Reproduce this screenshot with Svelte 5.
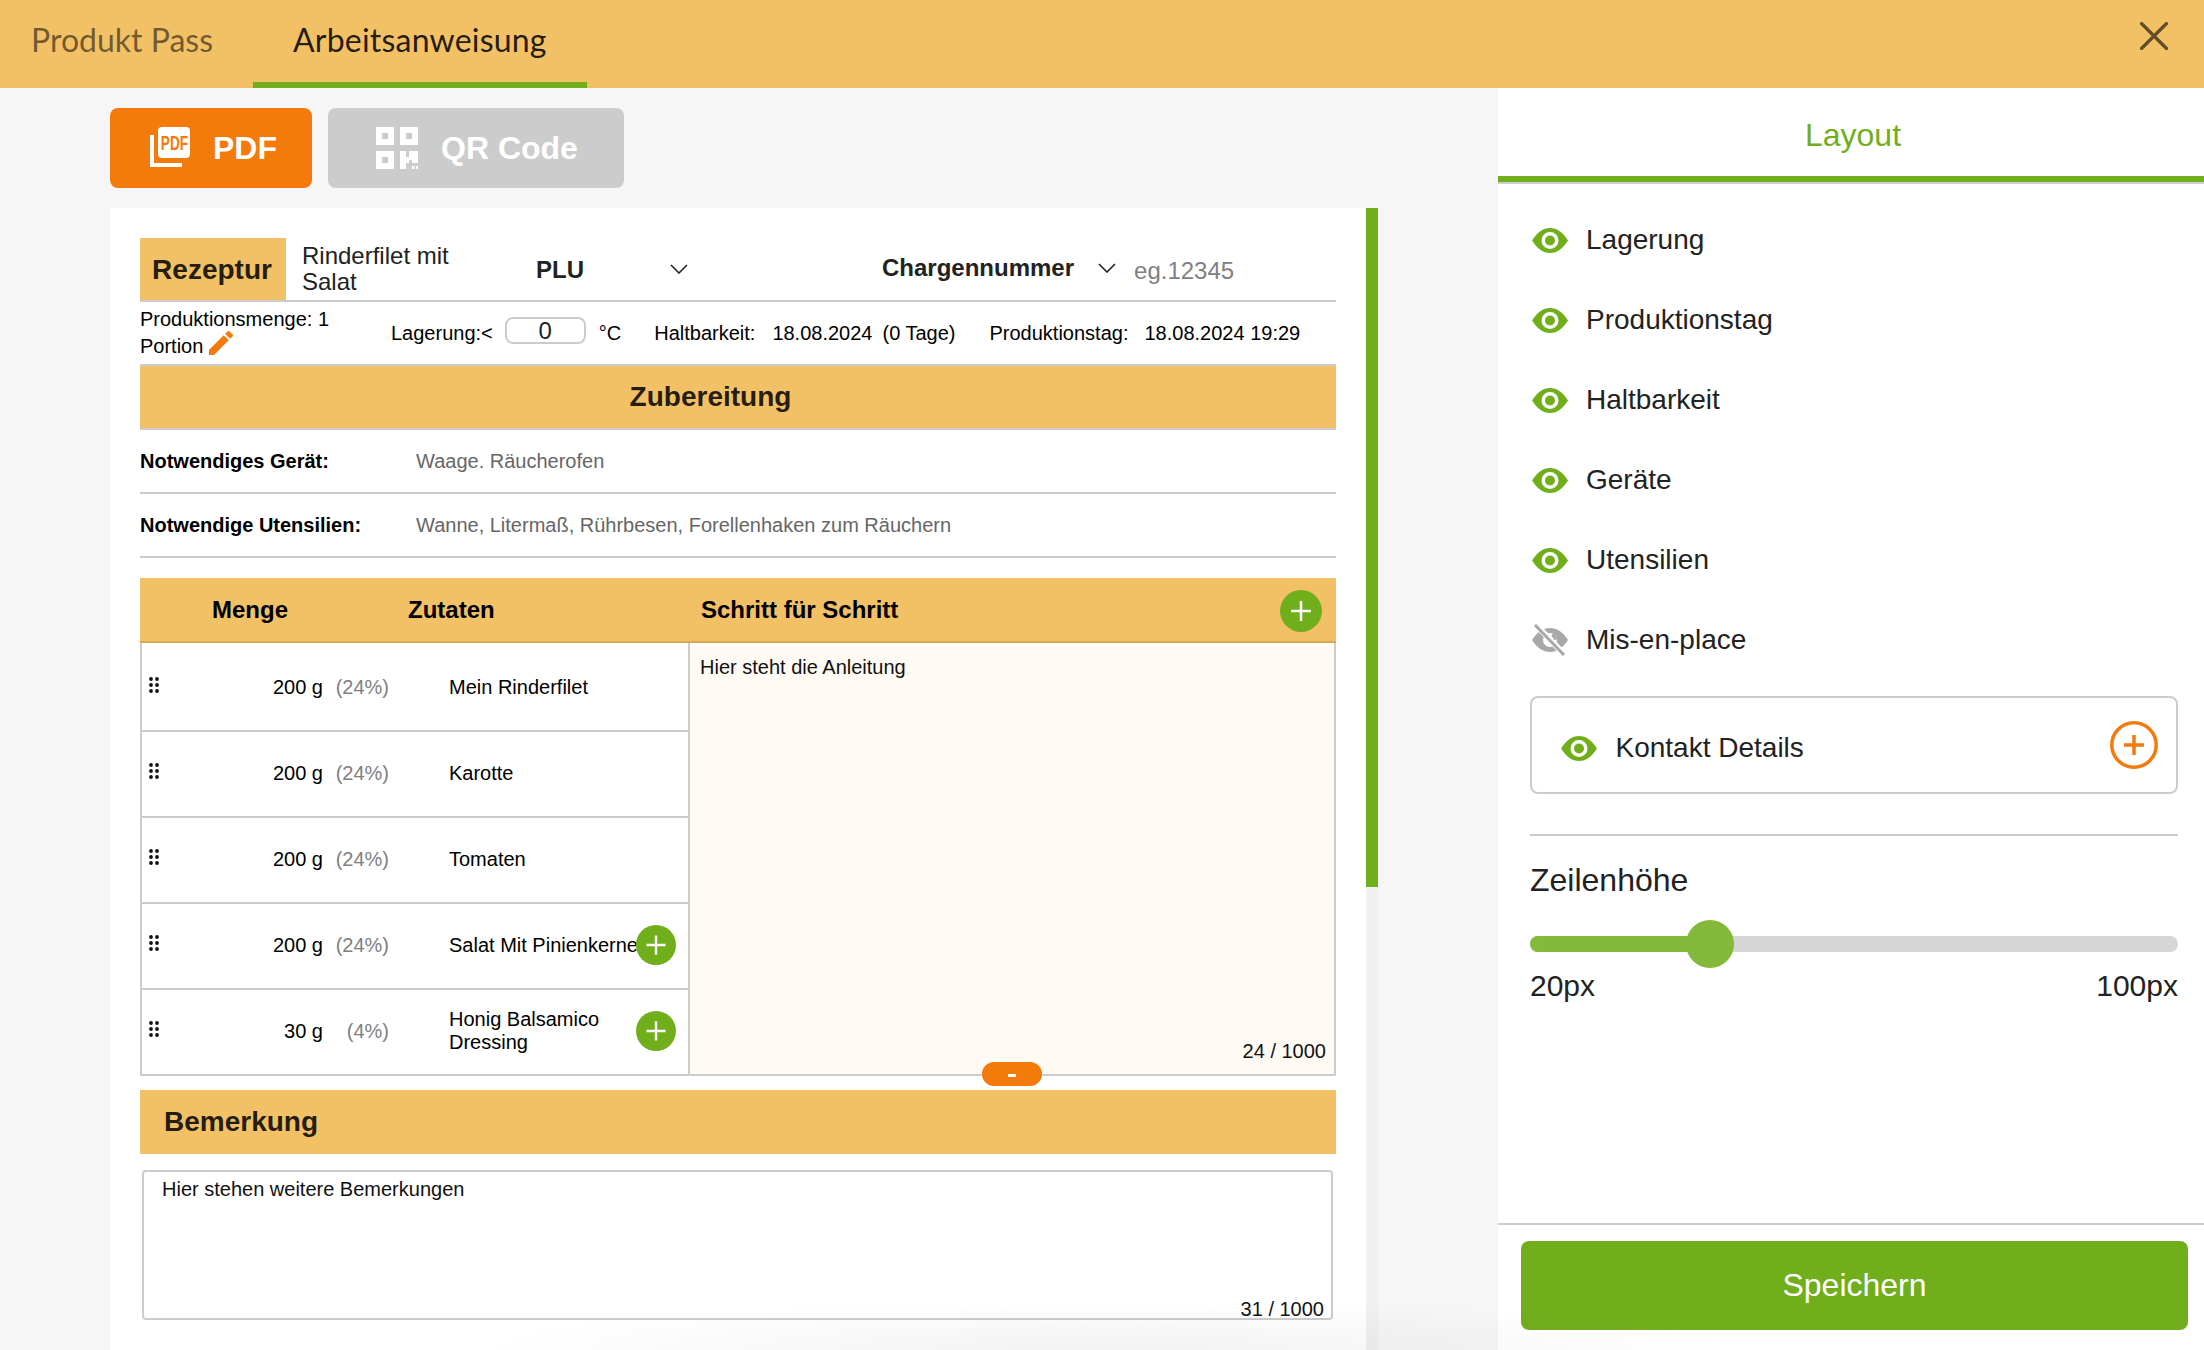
<script>
  const visibility = [
    { label: "Lagerung", on: true },
    { label: "Produktionstag", on: true },
    { label: "Haltbarkeit", on: true },
    { label: "Geräte", on: true },
    { label: "Utensilien", on: true },
    { label: "Mis-en-place", on: false }
  ];

  const ingredients = [
    { qty: "200 g", pct: "(24%)", name: "Mein Rinderfilet", add: false },
    { qty: "200 g", pct: "(24%)", name: "Karotte", add: false },
    { qty: "200 g", pct: "(24%)", name: "Tomaten", add: false },
    { qty: "200 g", pct: "(24%)", name: "Salat Mit Pinienkerne", add: true },
    { qty: "30 g", pct: "(4%)", name: "Honig Balsamico Dressing", add: true }
  ];

  const dots = [
    [2, 2], [8, 2],
    [2, 8], [8, 8],
    [2, 14], [8, 14]
  ];
</script>

{#snippet eye()}
  <svg class="eye" width="36" height="25" viewBox="0 0 36 25">
    <path fill="#71ae1c" fill-rule="evenodd" d="M0 12.5C5 4.5 11 0 18 0s13 4.500 18 12.500C31 20.500 25 25 18 25S5 20.500 0 12.500zM18 4a8.500 8.500 0 1 0 0 17 8.500 8.500 0 0 0 0-17z" />
    <circle cx="18" cy="12.500" r="5" fill="#71ae1c" />
  </svg>
{/snippet}

{#snippet eyeOff()}
  <svg class="eye" width="36" height="32" viewBox="0 0 36 32">
    <path fill="#a8a8a8" fill-rule="evenodd" d="M0 16C5 8 11 4 18 4s13 4 18 12c-5 8-11 12-18 12S5 24 0 16zM18 9a7 7 0 1 0 0 14 7 7 0 0 0 0-14z" />
    <path d="M20 11a5 5 0 0 1 3 5" fill="none" stroke="#a8a8a8" stroke-width="3" />
    <path d="M4 1l28 29" stroke="#fff" stroke-width="6" />
    <path d="M3 1l29 30" stroke="#a8a8a8" stroke-width="3" />
  </svg>
{/snippet}

{#snippet chevron()}
  <svg class="chevron" width="18" height="10" viewBox="0 0 18 10">
    <path d="M1 1l8 8 8-8" fill="none" stroke="#222" stroke-width="1.600" />
  </svg>
{/snippet}

{#snippet plus(size)}
  <svg width={size} height={size} viewBox="0 0 40 40" class="plus">
    <circle cx="20" cy="20" r="20" fill="#71ae1c" />
    <path d="M20 10.500v19M10.500 20h19" stroke="#fff" stroke-width="2.400" />
  </svg>
{/snippet}

<div class="page">
  <header class="topbar">
    <div class="tab first">Produkt Pass</div>
    <div class="tab active">Arbeitsanweisung</div>
    <svg class="close" width="28" height="28" viewBox="0 0 28 28">
      <path d="M1.500 1.500l25 25M26.500 1.500l-25 25" stroke="#000" stroke-opacity="0.6" stroke-width="3.200" stroke-linecap="round" />
    </svg>
  </header>

  <div class="body">
    <main class="left">
      <div class="actions">
        <button class="btn pdf">
          <svg width="40" height="40" viewBox="0 0 40 40">
            <path d="M2 8v30h30" fill="none" stroke="#fff" stroke-width="4" />
            <rect x="8" y="0" width="32" height="31" rx="4" fill="#fff" />
            <text transform="translate(24.500 23) scale(0.7 1)" text-anchor="middle" class="pdf-mark">PDF</text>
          </svg>
          <span>PDF</span>
        </button>
        <button class="btn qr">
          <svg width="42" height="42" viewBox="0 0 42 42" fill="#fff">
            <path fill-rule="evenodd" d="M0 0h18v18H0zM6 6v6h6V6z" />
            <path fill-rule="evenodd" d="M24 0h18v18H24zM30 6v6h6V6z" />
            <path fill-rule="evenodd" d="M0 24h18v18H0zM6 30v6h6v-6z" />
            <path d="M24 24h6v6h3v-6h9v12h-6v-3h-3v3h-3v6h-6z" />
            <path d="M36 39h2.500v3H36zM40 39h2v3h-2z" />
          </svg>
          <span>QR Code</span>
        </button>
      </div>

      <div class="sheet-wrap">
        <div class="sheet">
          <div class="title-row">
            <div class="title-box">Rezeptur</div>
            <div class="recipe-name">Rinderfilet mit Salat</div>
            <div class="plu"><b>PLU</b>{@render chevron()}</div>
            <div class="charge"><b>Chargennummer</b>{@render chevron()}<span class="charge-input">eg.12345</span></div>
          </div>

          <div class="info-row">
            <div class="portion">
              Produktionsmenge: 1 Portion
              <svg class="pencil" width="24" height="24" viewBox="3 3 18 18">
                <path fill="#f57a0c" d="M3 17.250V21h3.750L17.810 9.940l-3.750-3.750L3 17.250zM20.710 7.040c.39-.39.39-1.020 0-1.410l-2.340-2.340c-.39-.39-1.020-.39-1.410 0l-1.830 1.830 3.750 3.750 1.830-1.830z" />
              </svg>
            </div>
            <span>Lagerung:&lt;</span>
            <input class="temp" value="0" />
            <span class="unit">°C</span>
            <span class="hb">Haltbarkeit:</span>
            <span class="hb-date">18.08.2024</span>
            <span class="hb-days">(0 Tage)</span>
            <span class="pt">Produktionstag:</span>
            <span class="pt-date">18.08.2024 19:29</span>
          </div>

          <div class="section-bar">Zubereitung</div>

          <div class="note-row"><b>Notwendiges Gerät:</b><span>Waage. Räucherofen</span></div>
          <div class="note-row"><b>Notwendige Utensilien:</b><span>Wanne, Litermaß, Rührbesen, Forellenhaken zum Räuchern</span></div>

          <div class="table">
            <div class="table-head">
              <b class="h-menge">Menge</b>
              <b class="h-zutaten">Zutaten</b>
              <b class="h-schritt">Schritt für Schritt</b>
              {@render plus(42)}
            </div>
            <div class="table-body">
              <div class="rows">
                {#each ingredients as item}
                  <div class="row">
                    <svg class="handle" width="10" height="16" viewBox="0 0 10 16">
                      {#each dots as d}
                        <circle cx={d[0]} cy={d[1]} r="1.900" fill="#111" />
                      {/each}
                    </svg>
                    <span class="qty">{item.qty}</span>
                    <span class="pct">{item.pct}</span>
                    <span class="name">{item.name}</span>
                    {#if item.add}
                      {@render plus(40)}
                    {/if}
                  </div>
                {/each}
              </div>
              <div class="steps">
                <div>Hier steht die Anleitung</div>
                <div class="counter">24 / 1000</div>
                <div class="collapse"><span></span></div>
              </div>
            </div>
          </div>

          <div class="section-bar remark">Bemerkung</div>
          <div class="remark-box">
            <div>Hier stehen weitere Bemerkungen</div>
            <div class="counter">31 / 1000</div>
          </div>
        </div>
        <div class="scroll-track"><div class="scroll-thumb"></div></div>
      </div>
    </main>

    <aside class="right">
      <div class="panel-title">Layout</div>
      <div class="panel-body">
        {#each visibility as v}
          <div class="vis-row">
            {#if v.on}{@render eye()}{:else}{@render eyeOff()}{/if}
            <span>{v.label}</span>
          </div>
        {/each}

        <div class="contact">
          {@render eye()}
          <span>Kontakt Details</span>
          <svg class="contact-add" width="48" height="48" viewBox="0 0 48 48">
            <circle cx="24" cy="24" r="22.200" fill="none" stroke="#f57a0c" stroke-width="3.500" />
            <path d="M24 14v20M14 24h20" stroke="#f57a0c" stroke-width="3.500" />
          </svg>
        </div>

        <div class="line-height">
          <div class="lh-title">Zeilenhöhe</div>
          <div class="slider">
            <div class="slider-fill"></div>
            <div class="slider-thumb"></div>
          </div>
          <div class="lh-range"><span>20px</span><span>100px</span></div>
        </div>
      </div>
      <div class="panel-foot">
        <button class="save">Speichern</button>
      </div>
    </aside>
  </div>
  <div class="bottom-shade"></div>
</div>

<style>
  :global(body) {
    margin: 0;
    background: #fff;
  }

  .page {
    position: relative;
    width: 2204px;
    height: 1350px;
    overflow: hidden;
    display: flex;
    flex-direction: column;
    font-family: "Liberation Sans", Arial, sans-serif;
    font-size: 20px;
    color: #000;
  }

  .topbar {
    flex: 0 0 88px;
    display: flex;
    background: #f2c166;
    font-family: Lato, sans-serif;
    font-size: 32px;
    color: rgba(0, 0, 0, 0.55);
  }

  .tab {
    box-sizing: border-box;
    height: 88px;
    padding: 22px 40px 0;
    line-height: 36px;
  }

  .tab.first {
    padding-left: 31px;
  }

  .tab.active {
    color: rgba(0, 0, 0, 0.87);
    border-bottom: 6px solid #71ae1c;
    letter-spacing: 0.2px;
  }

  .close {
    margin: 22px 36px 0 auto;
  }

  .body {
    flex: 1;
    display: flex;
    min-height: 0;
  }

  .left {
    box-sizing: border-box;
    flex: 0 0 1498px;
    background: #f6f6f6;
    padding: 20px 0 0 110px;
    overflow: hidden;
  }

  .actions {
    display: flex;
    gap: 16px;
    margin-bottom: 20px;
  }

  .btn {
    box-sizing: border-box;
    height: 80px;
    border: 0;
    border-radius: 8px;
    display: flex;
    align-items: center;
    color: #fff;
    font-family: inherit;
    font-size: 32px;
    font-weight: 700;
  }

  .pdf {
    width: 202px;
    padding: 0 0 0 40px;
    gap: 23px;
    background: #f57a0c;
  }

  .pdf svg {
    margin-top: -2px;
  }

  .pdf-mark {
    font-family: "Liberation Sans", sans-serif;
    font-size: 19.5px;
    font-weight: 700;
    fill: #f57a0c;
  }

  .qr {
    width: 296px;
    padding: 0 0 0 48px;
    gap: 23px;
    background: #ccc;
  }

  .sheet-wrap {
    display: flex;
    align-items: flex-start;
  }

  .sheet {
    box-sizing: border-box;
    flex: 0 0 1256px;
    height: 1200px;
    background: #fff;
    padding: 30px;
  }

  .scroll-track {
    flex: 0 0 12px;
    height: 1200px;
    background: #f0f0f0;
  }

  .scroll-thumb {
    height: 679px;
    background: #71ae1c;
  }

  .title-row {
    display: flex;
    align-items: center;
    height: 64px;
    box-sizing: border-box;
    border-bottom: 2px solid #ccc;
    font-size: 24px;
    color: #222;
  }

  .title-box {
    flex: 0 0 146px;
    box-sizing: border-box;
    height: 62px;
    padding-right: 2px;
    background: #f2c166;
    font-size: 28px;
    font-weight: 700;
    line-height: 64px;
    text-align: center;
    color: rgba(0, 0, 0, 0.87);
  }

  .recipe-name {
    flex: 0 0 250px;
    box-sizing: border-box;
    padding: 0 76px 0 16px;
    line-height: 26px;
  }

  .plu {
    flex: 0 0 346px;
    display: flex;
    align-items: center;
    gap: 86px;
  }

  .plu b {
    margin-top: 2px;
  }

  .charge {
    display: flex;
    align-items: center;
    gap: 24px;
    margin-top: -2px;
  }

  .charge-input {
    margin: 5px 0 0 -6px;
    color: #808080;
  }

  .info-row {
    display: flex;
    align-items: center;
    height: 62px;
    white-space: nowrap;
  }

  .portion {
    flex: 0 0 251px;
    box-sizing: border-box;
    padding-right: 50px;
    white-space: normal;
    line-height: 27px;
  }

  .pencil {
    vertical-align: 4px;
    margin: -10px 0 -6px;
  }

  .temp {
    box-sizing: border-box;
    width: 81px;
    height: 27px;
    margin: -5px 0 0 12px;
    padding: 0;
    border: 2px solid #ccc;
    border-radius: 8px;
    font-family: inherit;
    font-size: 24px;
    text-align: center;
    color: #222;
    outline: none;
  }

  .unit {
    margin-left: 13px;
  }

  .hb {
    margin-left: 33px;
  }

  .hb-date {
    margin-left: 17px;
  }

  .hb-days {
    margin-left: 10px;
  }

  .pt {
    margin-left: 34px;
  }

  .pt-date {
    margin-left: 16px;
  }

  .section-bar {
    box-sizing: border-box;
    height: 66px;
    border-top: 2px solid #ccc;
    border-bottom: 2px solid #ccc;
    background: #f2c166;
    padding-right: 55px;
    font-size: 28px;
    font-weight: 700;
    line-height: 62px;
    text-align: center;
    color: rgba(0, 0, 0, 0.87);
  }

  .note-row {
    box-sizing: border-box;
    height: 64px;
    display: flex;
    align-items: center;
    border-bottom: 2px solid #ccc;
  }

  .note-row b {
    flex: 0 0 276px;
  }

  .note-row span {
    color: #666;
  }

  .table {
    margin-top: 20px;
  }

  .table-head {
    box-sizing: border-box;
    height: 65px;
    display: flex;
    align-items: center;
    background: #f2c166;
    border-bottom: 2px solid #d9a855;
    font-size: 24px;
  }

  .h-menge {
    margin-left: 72px;
    flex: 0 0 196px;
  }

  .h-zutaten {
    flex: 0 0 293px;
  }

  .h-schritt {
    flex: 1;
  }

  .table-head .plus {
    margin: 2px 14px 0 0;
  }

  .table-body {
    display: flex;
    height: 433px;
  }

  .rows {
    box-sizing: border-box;
    flex: 0 0 548px;
    padding-top: 3px;
    border-left: 2px solid #ccc;
  }

  .row {
    box-sizing: border-box;
    height: 86px;
    padding-bottom: 2px;
    display: flex;
    align-items: center;
    border-bottom: 2px solid #ccc;
  }

  .handle {
    flex: 0 0 10px;
    margin: -4px 0 0 7px;
  }

  .qty {
    flex: 0 0 164px;
    text-align: right;
  }

  .pct {
    flex: 0 0 66px;
    text-align: right;
    color: #808080;
  }

  .name {
    flex: 0 0 190px;
    margin-left: 60px;
  }

  .row .plus {
    flex: 0 0 40px;
    margin-left: -3px;
  }

  .steps {
    position: relative;
    box-sizing: border-box;
    flex: 1;
    display: flex;
    flex-direction: column;
    justify-content: space-between;
    padding: 13px 8px 11px 10px;
    background: #fffaf4;
    border-left: 2px solid #ccc;
    border-right: 2px solid #ccc;
    border-bottom: 2px solid #ccc;
    color: #111;
  }

  .counter {
    text-align: right;
  }

  .collapse {
    position: absolute;
    left: 292px;
    bottom: -12px;
    width: 60px;
    height: 24px;
    border-radius: 12px;
    background: #f57a0c;
    display: flex;
    align-items: center;
    justify-content: center;
  }

  .collapse span {
    width: 8px;
    height: 3px;
    margin-top: 3px;
    background: #fff;
  }

  .section-bar.remark {
    height: 64px;
    margin-top: 14px;
    padding: 0 0 0 24px;
    border: 0;
    line-height: 64px;
    text-align: left;
  }

  .remark-box {
    box-sizing: border-box;
    height: 150px;
    margin: 16px 3px 0 2px;
    padding: 6px 7px 0 18px;
    border: 2px solid #ccc;
    border-radius: 4px;
    display: flex;
    flex-direction: column;
    justify-content: space-between;
    color: #111;
  }

  .remark-box .counter {
    margin-bottom: -3px;
  }

  .right {
    flex: 0 0 706px;
    display: flex;
    flex-direction: column;
    background: #fff;
  }

  .panel-title {
    box-sizing: border-box;
    flex: 0 0 94px;
    padding: 6px 0 0 4px;
    border-bottom: 6px solid #71ae1c;
    box-shadow: 0 2px 0 #ccc;
    font-size: 32px;
    line-height: 82px;
    text-align: center;
    color: #71ae1c;
  }

  .panel-body {
    flex: 1;
    padding: 18px 26px 0 32px;
    color: #222;
    font-size: 28px;
  }

  .vis-row {
    height: 80px;
    display: flex;
    align-items: center;
    gap: 18px;
  }

  .eye {
    flex: 0 0 36px;
    margin-left: 2px;
  }

  .contact {
    box-sizing: border-box;
    height: 98px;
    margin-top: 16px;
    padding: 6px 18px 0 27px;
    display: flex;
    align-items: center;
    gap: 18.5px;
    border: 2px solid #ccc;
    border-radius: 8px;
  }

  .contact-add {
    margin: -7px 0 0 auto;
  }

  .line-height {
    margin-top: 40px;
    padding-top: 26px;
    border-top: 2px solid #ccc;
  }

  .lh-title {
    font-size: 32px;
    line-height: 36px;
  }

  .slider {
    position: relative;
    height: 16px;
    margin-top: 38px;
    border-radius: 8px;
    background: #d6d6d6;
  }

  .slider-fill {
    height: 16px;
    width: 180px;
    border-radius: 8px 0 0 8px;
    background: #84ba3a;
  }

  .slider-thumb {
    position: absolute;
    left: 156px;
    top: -16px;
    width: 48px;
    height: 48px;
    border-radius: 50%;
    background: #84ba3a;
  }

  .lh-range {
    display: flex;
    justify-content: space-between;
    margin-top: 16px;
    font-size: 30px;
    line-height: 36px;
  }

  .panel-foot {
    box-sizing: border-box;
    flex: 0 0 127px;
    padding: 16px 16px 0 23px;
    border-top: 2px solid #ccc;
  }

  .save {
    width: 100%;
    height: 89px;
    border: 0;
    border-radius: 8px;
    background: #71ae1c;
    color: #fff;
    font-family: inherit;
    font-size: 32px;
  }

  .bottom-shade {
    position: absolute;
    left: 0;
    right: 0;
    bottom: 0;
    height: 50px;
    pointer-events: none;
    background: radial-gradient(ellipse 640px 50px at 1110px 100%, rgba(0, 0, 0, 0.05), transparent);
  }
</style>
